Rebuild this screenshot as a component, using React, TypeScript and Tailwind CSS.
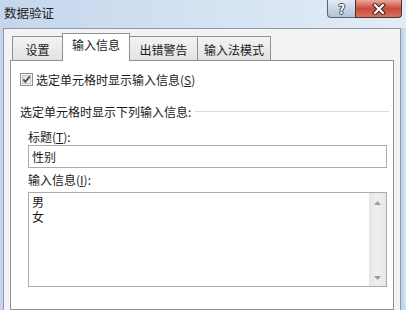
export default function App() {
  const font = "font-['Noto_Sans_CJK_SC','Noto_Sans',sans-serif]";
  return (
    <div className={`w-[406px] h-[310px] overflow-hidden flex flex-col bg-[#c8d9ee] text-[#1b1b1b] ${font}`}>
      {/* Title bar */}
      <div className="h-[28px] shrink-0 flex items-start justify-between bg-gradient-to-r from-[#c5d6ec] via-[#d4e2f2] to-[#e3ecf6]">
        <span className="ml-[4px] mt-[5px] text-[12.5px] leading-[15px] text-[#1e1e1e]">数据验证</span>
        <div className="flex mr-[4px]">
          <div className="w-[28px] h-[18px] flex items-center justify-center border-l border-b border-[#56657a] rounded-bl-[4px] bg-gradient-to-b from-[#e2eaf4] via-[#c9d6e6] to-[#b2c3d8]">
            <span className="text-white text-[13px] font-bold leading-none mt-[-1px] [text-shadow:1px_0_0_#3a4658,-1px_0_0_#3a4658,0_1px_0_#3a4658,0_-1px_0_#3a4658]">?</span>
          </div>
          <div className="w-[47px] h-[18px] flex items-center justify-center border-l border-r border-b border-[#4a3232] rounded-br-[4px] bg-gradient-to-b from-[#e9a797] via-[#c94b3b] to-[#d7735f]">
            <svg width="14" height="12" viewBox="0 0 14 12">
              <path d="M3 2 L11 10 M11 2 L3 10" stroke="#3a2424" strokeWidth="4.2" strokeLinecap="square" fill="none" />
              <path d="M3 2 L11 10 M11 2 L3 10" stroke="#ffffff" strokeWidth="2.2" strokeLinecap="square" fill="none" />
            </svg>
          </div>
        </div>
      </div>

      {/* Body */}
      <div className="flex-1 flex">
        <div className="w-[3px] shrink-0 bg-[#c3d5ec]" />
        <div className="w-[398px] shrink-0 border-l border-t border-r border-[#8e99a8] bg-[#f3f3f3] pl-[6px] pr-[6px] pt-[4px] flex flex-col">
          {/* Tabs */}
          <div className="h-[27px] shrink-0 flex items-end pl-[2px] relative z-10 text-[12px]">
            <div className="w-[50px] h-[24px] border-l border-t border-[#8e9096] bg-gradient-to-b from-[#f4f4f4] to-[#e2e2e2] flex items-center justify-center pt-[2px] leading-[14px]">
              设置
            </div>
            <div className="w-[68px] h-[28px] -mb-px border-l border-t border-r border-[#8e9096] bg-white flex items-center justify-center pb-[5px] leading-[14px]">
              输入信息
            </div>
            <div className="w-[67px] h-[24px] border-t border-[#8e9096] bg-gradient-to-b from-[#f4f4f4] to-[#e2e2e2] flex items-center justify-center pt-[2px] leading-[14px]">
              出错警告
            </div>
            <div className="w-[74px] h-[24px] border-l border-t border-r border-[#8e9096] bg-gradient-to-b from-[#f4f4f4] to-[#e2e2e2] flex items-center justify-center pt-[2px] leading-[14px]">
              输入法模式
            </div>
          </div>

          {/* Pane */}
          <div className="flex-1 border border-[#8e9096] bg-white flex flex-col text-[12px]">
            <div className="mt-[12px] ml-[9px] h-[13px] flex items-center gap-[3px]">
              <svg width="13" height="13" viewBox="0 0 13 13">
                <defs>
                  <linearGradient id="cb" x1="0" y1="0" x2="1" y2="1">
                    <stop offset="0" stopColor="#dcdcdc" />
                    <stop offset="1" stopColor="#fbfbfb" />
                  </linearGradient>
                </defs>
                <rect x="0.5" y="0.5" width="12" height="12" fill="#f6f6f6" stroke="#8f8f8f" />
                <rect x="2.5" y="2.5" width="8" height="8" fill="url(#cb)" stroke="#c8c8c8" />
                <path d="M3.3 6.4 L5.4 8.8 L9.8 3.4" stroke="#3d4f6e" strokeWidth="1.8" fill="none" />
              </svg>
              <span className="leading-[13px]">
                选定单元格时显示输入信息(<span className="underline">S</span>)
              </span>
            </div>

            <div className="mt-[19px] ml-[9px] mr-[4px] h-[14px] flex items-center">
              <span className="leading-[14px]">选定单元格时显示下列输入信息:</span>
              <div className="flex-1 ml-[4px] h-px bg-[#d9dde2] mt-[-2px]" />
            </div>

            <div className="mt-[11px] ml-[17px] h-[14px] leading-[14px]">
              标题(<span className="underline">T</span>):
            </div>

            <div className="mt-[1px] ml-[17px] mr-[6px] h-[23px] border border-[#a9abb0] flex items-center pl-[3px] leading-[14px]">
              性别
            </div>

            <div className="mt-[5px] ml-[17px] h-[14px] leading-[14px]">
              输入信息(<span className="underline">I</span>):
            </div>

            <div className="mt-[5px] ml-[17px] mr-[6px] h-[95px] border border-[#a9abb0] flex">
              <div className="flex-1 pl-[3px] pt-[1px] leading-[15px] whitespace-pre-line">
                {"男\n女"}
              </div>
              <div className="w-[17px] bg-gradient-to-r from-[#e6e6e6] via-[#efefef] to-[#e8e8e8] flex flex-col justify-between items-center">
                <div className="h-[17px] flex items-center justify-center mt-[1px]">
                  <svg width="7" height="4" viewBox="0 0 7 4">
                    <polygon points="0,4 3.5,0 7,4" fill="#9c9c9c" />
                  </svg>
                </div>
                <div className="h-[17px] flex items-center justify-center">
                  <svg width="7" height="4" viewBox="0 0 7 4">
                    <polygon points="0,0 3.5,4 7,0" fill="#9c9c9c" />
                  </svg>
                </div>
              </div>
            </div>
          </div>
        </div>
        <div className="flex-1 bg-gradient-to-r from-[#bcd0e9] to-[#d3e2f3]" />
      </div>
    </div>
  );
}
